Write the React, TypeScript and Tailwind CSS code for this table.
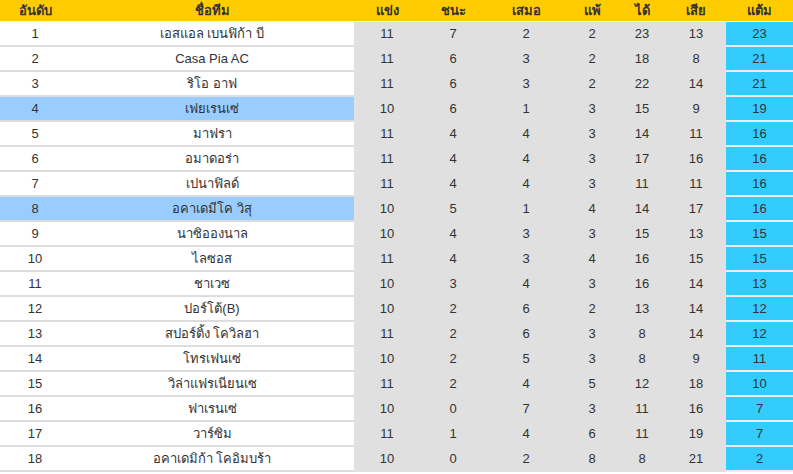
const rows: [number, string, number, number, number, number, number, number, number][] = [
  [1, "เอสแอล เบนฟิก้า บี", 11, 7, 2, 2, 23, 13, 23],
  [2, "Casa Pia AC", 11, 6, 3, 2, 18, 8, 21],
  [3, "ริโอ อาฟ", 11, 6, 3, 2, 22, 14, 21],
  [4, "เฟยเรนเซ่", 10, 6, 1, 3, 15, 9, 19],
  [5, "มาฟรา", 11, 4, 4, 3, 14, 11, 16],
  [6, "อมาดอร่า", 11, 4, 4, 3, 17, 16, 16],
  [7, "เปนาฟิลด์", 11, 4, 4, 3, 11, 11, 16],
  [8, "อคาเดมีโค วิสุ", 10, 5, 1, 4, 14, 17, 16],
  [9, "นาซิอองนาล", 10, 4, 3, 3, 15, 13, 15],
  [10, "ไลซอส", 11, 4, 3, 4, 16, 15, 15],
  [11, "ชาเวซ", 10, 3, 4, 3, 16, 14, 13],
  [12, "ปอร์โต้(B)", 10, 2, 6, 2, 13, 14, 12],
  [13, "สปอร์ติ้ง โควิลฮา", 11, 2, 6, 3, 8, 14, 12],
  [14, "โทรเฟนเซ่", 10, 2, 5, 3, 8, 9, 11],
  [15, "วิล่าแฟรเนียนเซ", 11, 2, 4, 5, 12, 18, 10],
  [16, "ฟาเรนเซ่", 10, 0, 7, 3, 11, 16, 7],
  [17, "วาร์ซิม", 11, 1, 4, 6, 11, 19, 7],
  [18, "อคาเดมิก้า โคอิมบร้า", 10, 0, 2, 8, 8, 21, 2],
]

const headers = ["อันดับ", "ชื่อทีม", "แข่ง", "ชนะ", "เสมอ", "แพ้", "ได้", "เสีย", "แต้ม"]

// rows 4 and 8 get the light blue band
const highlighted = [4, 8]

export default function App() {
  return (
    <div className="w-[793px] h-[474px] overflow-hidden bg-white text-[13px] text-[#333] font-['Liberation_Sans','Noto_Sans',sans-serif]">
      <div className="grid grid-cols-[70px_284px_66px_66px_80px_52px_48px_60px_67px]">
        {headers.map((h) => (
          <div key={h} className="h-[22px] bg-[#ffcc00] flex items-center justify-center font-bold text-[#333] border-b border-[#f3f3f3] box-border">
            {h}
          </div>
        ))}

        {rows.map(([pos, name, p, w, d, l, gf, ga, pts]) => {
          const hi = highlighted.includes(pos)
          const side = hi ? "bg-[#99ccff] border-[#dddddd]" : "bg-white border-[#dddddd]"
          return [
            <div key={pos + "-pos"} className={`h-[25px] box-border border-b-2 flex items-center justify-center ${side}`}>{pos}</div>,
            <div key={pos + "-name"} className={`h-[25px] box-border border-b-2 flex items-center justify-center ${side}`}>{name}</div>,
            ...[p, w, d, l, gf, ga].map((v, i) => (
              <div key={pos + "-s" + i} className="h-[25px] box-border border-b-2 border-[#e0e0e0] bg-[#e0e0e0] flex items-center justify-center">
                {v}
              </div>
            )),
            <div key={pos + "-pts"} className="h-[25px] box-border border-b-2 border-[#eeeeee] bg-[#33ccff] flex items-center justify-center">
              {pts}
            </div>,
          ]
        })}
      </div>
    </div>
  )
}
